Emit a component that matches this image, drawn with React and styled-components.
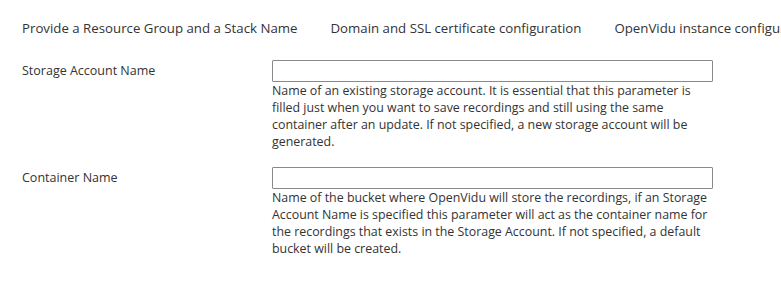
import React from 'react';
import styled, { createGlobalStyle } from 'styled-components';

const GlobalStyle = createGlobalStyle`
  html, body {
    margin: 0;
    padding: 0;
    background: #ffffff;
  }
  body {
    font-family: "Open Sans", "Noto Sans", sans-serif;
    color: #333333;
  }
`;

const Page = styled.div`
  width: 781px;
  height: 287px;
  overflow: hidden;
  padding: 20px 0 0 22px;
  box-sizing: border-box;
`;

const Steps = styled.div`
  display: flex;
  gap: 33px;
  white-space: nowrap;
  font-size: 13.25px;
  line-height: 17px;
  margin-bottom: 23px;
`;

const Step = styled.span`
  flex-shrink: 0;
`;

const Field = styled.div`
  display: grid;
  grid-template-columns: 250px 441px;
  margin-bottom: 17px;
`;

const Label = styled.label`
  font-size: 12.5px;
  line-height: 17px;
  padding-top: 2px;
`;

const Input = styled.input`
  display: block;
  width: 100%;
  height: 22px;
  box-sizing: border-box;
  border: 1px solid #8a8a8a;
  border-radius: 1px;
  margin: 0;
  padding: 0 6px;
  font: inherit;
  outline: none;
`;

const Help = styled.p`
  margin: 0;
  font-size: 12.4px;
  line-height: 17px;
`;

const steps = [
  'Provide a Resource Group and a Stack Name',
  'Domain and SSL certificate configuration',
  'OpenVidu instance configuration',
];

const fields = [
  {
    id: 'storageAccount',
    label: 'Storage Account Name',
    help: 'Name of an existing storage account. It is essential that this parameter is filled just when you want to save recordings and still using the same container after an update. If not specified, a new storage account will be generated.',
  },
  {
    id: 'containerName',
    label: 'Container Name',
    help: 'Name of the bucket where OpenVidu will store the recordings, if an Storage Account Name is specified this parameter will act as the container name for the recordings that exists in the Storage Account. If not specified, a default bucket will be created.',
  },
];

const App = () => (
  <>
    <GlobalStyle />
    <Page>
      <Steps>
        {steps.map((s) => (
          <Step key={s}>{s}</Step>
        ))}
      </Steps>
      {fields.map((f) => (
        <Field key={f.id}>
          <Label htmlFor={f.id}>{f.label}</Label>
          <div>
            <Input id={f.id} type="text" />
            <Help>{f.help}</Help>
          </div>
        </Field>
      ))}
    </Page>
  </>
);

export default App;
